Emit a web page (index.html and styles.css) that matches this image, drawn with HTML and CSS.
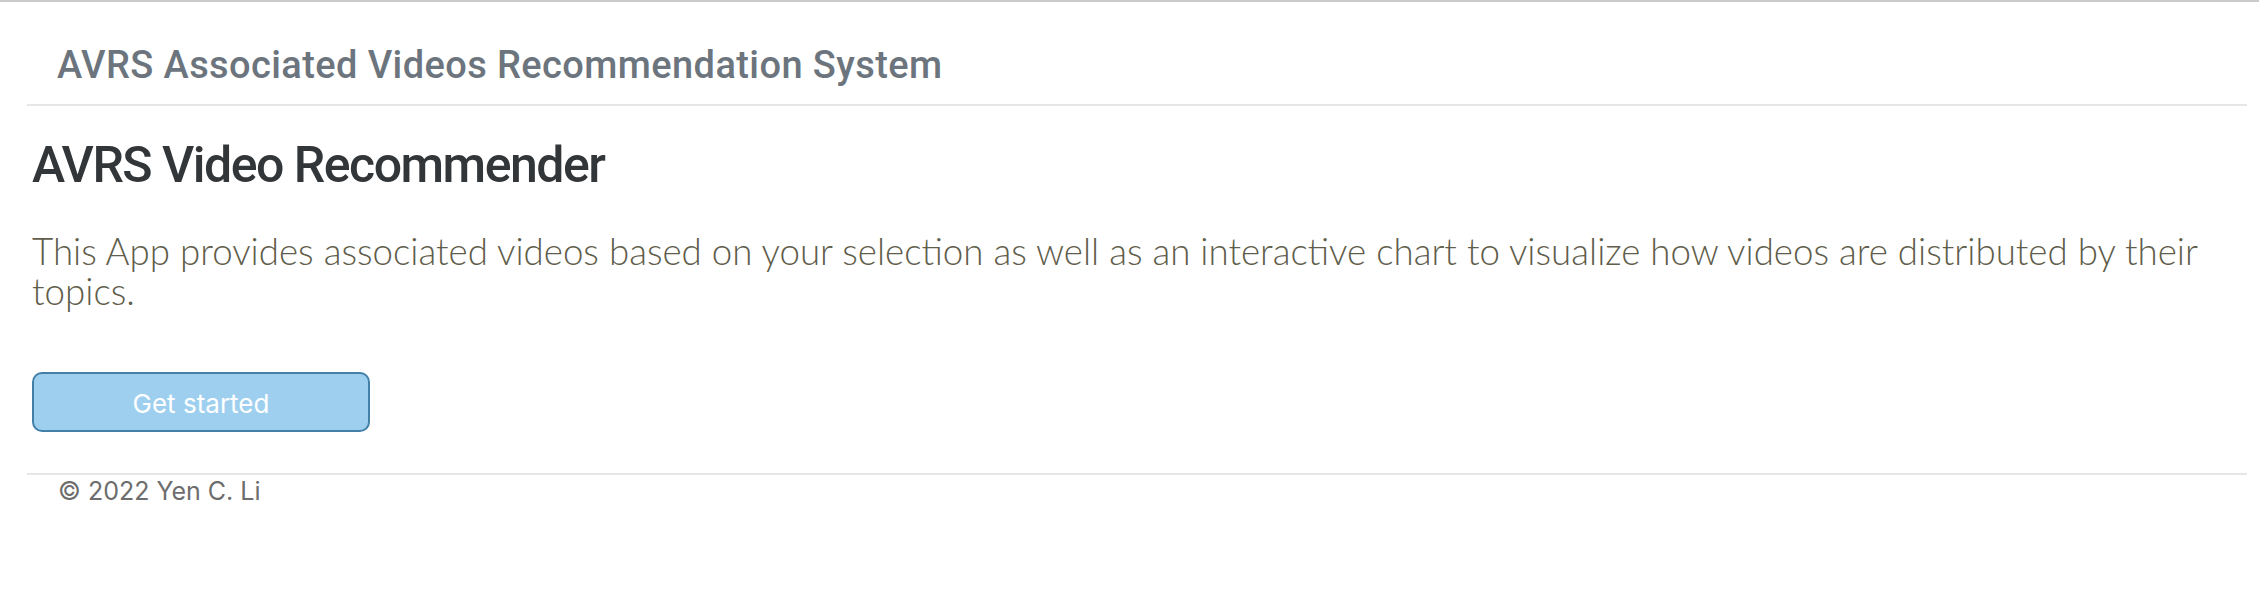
FILE: index.html
```html
<!DOCTYPE html>
<html lang="en">
<head>
<meta charset="utf-8">
<title>AVRS Video Recommender</title>
<link rel="stylesheet" href="styles.css">
</head>
<body>
<div class="page">
  <header class="site-header">
    <span class="brand">AVRS Associated Videos Recommendation System</span>
  </header>
  <main class="content">
    <h1 class="title">AVRS Video Recommender</h1>
    <p class="lead">This App provides associated videos based on your selection as well as an interactive chart to visualize how videos are distributed by their topics.</p>
    <button class="btn-start" type="button">Get started</button>
  </main>
  <footer class="site-footer">
    <span class="copy">© 2022 Yen C. Li</span>
  </footer>
</div>
</body>
</html>
```

FILE: styles.css
```css
html, body {
  margin: 0;
  padding: 0;
  background: #ffffff;
}

body {
  border-top: 2px solid #cbcbcb;
  font-family: Inter, "Liberation Sans", sans-serif;
}

.page {
  margin: 0 12px 0 27px;
}

.site-header {
  padding: 40px 0 16px 30px;
  border-bottom: 2px solid #e6e6e6;
}

.brand {
  display: block;
  font-family: Roboto, Inter, sans-serif;
  font-size: 38px;
  line-height: 46px;
  font-weight: 500;
  letter-spacing: 0.4px;
  color: #6c757d;
}

.content {
  padding: 0 5px;
  display: flex;
  flex-direction: column;
  align-items: flex-start;
}

.title {
  margin: 29px 0 0 0;
  font-family: Roboto, Inter, sans-serif;
  font-size: 50px;
  line-height: 60px;
  font-weight: 500;
  letter-spacing: -1.5px;
  color: #333639;
}

.lead {
  margin: 36px 0 0 0;
  font-family: Lato, "Open Sans", sans-serif;
  font-weight: 300;
  font-size: 36.7px;
  line-height: 40px;
  color: #5f5d4b;
}

.btn-start {
  margin: 61px 0 41px 0;
  width: 338px;
  height: 60px;
  box-sizing: border-box;
  border: 2px solid #4380a8;
  border-radius: 10px;
  background: #9ecfee;
  color: #ffffff;
  font-family: Inter, "Liberation Sans", sans-serif;
  font-size: 26px;
  line-height: 30px;
  font-weight: 400;
  padding: 3px 0 0 0;
}

.site-footer {
  border-top: 2px solid #e6e6e6;
  padding: 2px 0 0 31px;
}

.copy {
  display: block;
  font-size: 25px;
  line-height: 28px;
  color: #6d6d6d;
}
```
